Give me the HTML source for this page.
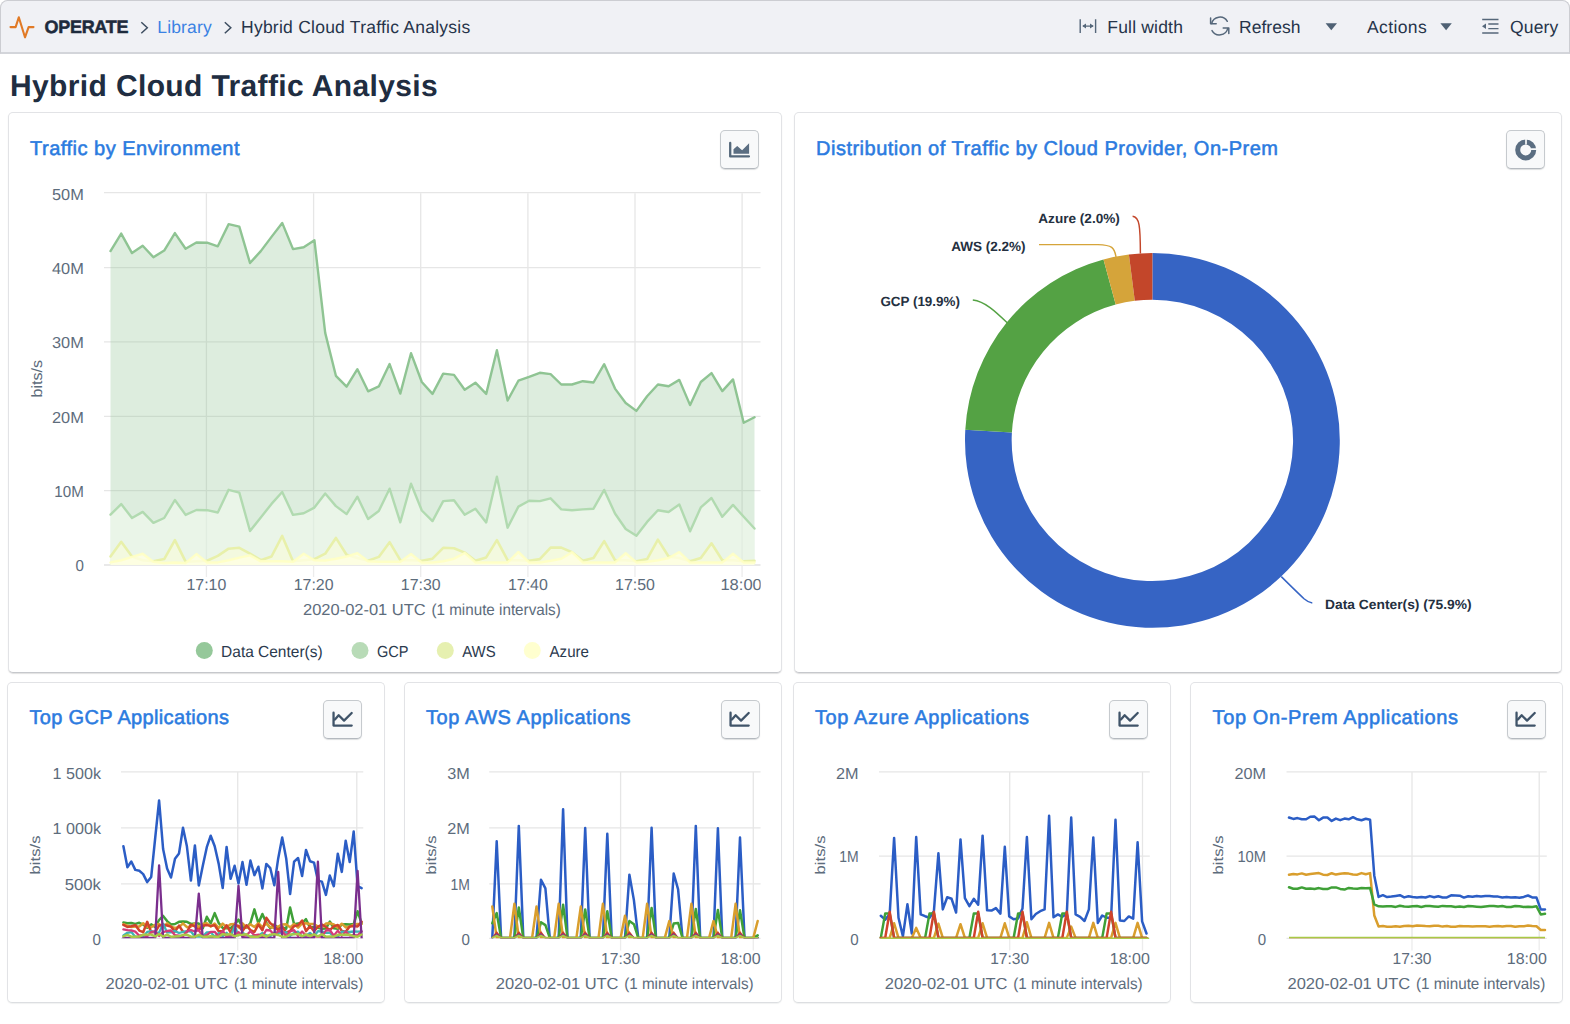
<!DOCTYPE html>
<html lang="en"><head><meta charset="utf-8"><title>Hybrid Cloud Traffic Analysis</title>
<style>
html,body{margin:0;padding:0;background:#fff;}
body{text-rendering:geometricPrecision;width:1570px;height:1024px;position:relative;overflow:hidden;font-family:"Liberation Sans", sans-serif;color:#1f2c3d;}
.topbar{position:absolute;left:0;top:0;width:1567.5px;height:51px;background:#f0f1f5;border:1px solid #cccdd2;border-bottom:2px solid #d3d5da;border-radius:7.5px 7.5px 0 0;}
.tb{position:absolute;white-space:nowrap;font-size:17.5px;line-height:20px;color:#26344a;}
.h1{position:absolute;left:10px;top:67.1px;font-size:30px;line-height:40px;font-weight:bold;color:#202d41;white-space:nowrap;letter-spacing:0;}
.panel{position:absolute;box-sizing:border-box;background:#fff;border:1px solid #e2e3e6;border-bottom-color:#c6c8cc;border-radius:5px;box-shadow:0 1px 1px rgba(60,65,70,.16);}
.panel.lo{border-bottom-color:#dcdee1;box-shadow:0 1px 1px rgba(60,65,70,.07);}
.ptitle{position:absolute;font-size:20px;line-height:26px;color:#2b7be0;white-space:nowrap;-webkit-text-stroke:0.55px #2b7be0;}
.btn{position:absolute;box-sizing:border-box;width:39px;height:39px;border:1px solid #c6cace;border-bottom-color:#b4b9bf;border-radius:5px;background:#f8f9fa;box-shadow:0 1px 1px rgba(60,70,80,.18);overflow:hidden;}
.btn svg{position:absolute;left:-0.5px;top:-0.5px;}
.ov{position:absolute;left:0;top:0;pointer-events:none;}
</style></head><body>
<div class="topbar"></div>
<svg class="ov" width="1570" height="53" viewBox="0 0 1570 53">
<path d="M10.5 27.1 H15.6 L18.8 17.3 L25 37.3 L28.6 27.1 H33.5" fill="none" stroke="#e17a26" stroke-width="2.1" stroke-linecap="round" stroke-linejoin="round"/>
<path d="M141.3 22.2 L147.3 27.7 L141.3 33.2" fill="none" stroke="#3d4d60" stroke-width="1.5"/>
<path d="M224.8 22.2 L230.8 27.7 L224.8 33.2" fill="none" stroke="#3d4d60" stroke-width="1.5"/>
<g fill="none" stroke="#55677a" stroke-width="1.4"><path d="M1080.2 19.2 V33 M1095.6 19.2 V33 M1083 26.1 H1093"/></g>
<path d="M1082.2 26.1 L1086 23.6 V28.6 Z M1093.8 26.1 L1090 23.6 V28.6 Z" fill="#55677a"/>
<g fill="none" stroke="#55677a" stroke-width="1.5" stroke-linecap="round" stroke-linejoin="round"><path d="M1211.6 23.6 A8.6 8.6 0 0 1 1227.3 21.3 M1227.8 28.4 A8.6 8.6 0 0 1 1212 30.6"/><path d="M1210.6 18 V23.8 H1216.2 M1228.8 33.6 V27.9 H1223.2"/></g>
<path d="M1325.6 23.2 H1337 L1331.3 30.3 Z" fill="#4f6174"/>
<path d="M1440.4 23.2 H1451.8 L1446.1 30.3 Z" fill="#4f6174"/>
<g fill="none" stroke="#55677a" stroke-width="1.4"><path d="M1482.2 19.5 H1498.5 M1488.3 24 H1498.5 M1488.3 28.6 H1498.5 M1482.2 33 H1498.5"/></g>
<path d="M1482 26.3 L1486 23.6 V29 Z" fill="#55677a"/>
</svg>
<div class="tb" style="letter-spacing:-0.312px;left:44.6px;top:17px;font-weight:bold;font-size:18px;color:#1d2a3c;-webkit-text-stroke:0.5px #1d2a3c">OPERATE</div>
<div class="tb" style="letter-spacing:0.143px;left:157.3px;top:17px;color:#3b82e3">Library</div>
<div class="tb" style="letter-spacing:0.244px;left:241px;top:17px">Hybrid Cloud Traffic Analysis</div>
<div class="tb" style="letter-spacing:0.188px;left:1107.3px;top:16.5px">Full width</div>
<div class="tb" style="letter-spacing:0.046px;left:1239px;top:16.5px">Refresh</div>
<div class="tb" style="letter-spacing:0.373px;left:1367px;top:16.5px">Actions</div>
<div class="tb" style="letter-spacing:0.169px;left:1510px;top:16.5px">Query</div>
<div class="h1" style="letter-spacing:0.369px">Hybrid Cloud Traffic Analysis</div>
<div class="panel" style="left:7.8px;top:111.6px;width:774px;height:561.8px"></div><div class="ptitle" style="letter-spacing:0.501px;left:30px;top:135.7px">Traffic by Environment</div><div class="btn" style="left:720.3px;top:130.2px"><svg width="38" height="38" viewBox="0 0 38 38"><path d="M9.2 12 V25.45 H27.9" fill="none" stroke="#55687b" stroke-width="2.3" stroke-linecap="round" stroke-linejoin="round"/><path d="M12.5 22.65 V18.25 L16.2 15.05 L21.1 19.15 L28.1 12.35 V22.65 Z" fill="#5b6e82"/></svg></div><div class="panel" style="left:794.1px;top:111.6px;width:768.2px;height:561.8px"></div><div class="ptitle" style="letter-spacing:0.498px;left:816px;top:135.7px">Distribution of Traffic by Cloud Provider, On-Prem</div><div class="btn" style="left:1506.1px;top:130.2px"><svg width="38" height="38" viewBox="0 0 38 38"><circle cx="18.7" cy="18.9" r="8" fill="none" stroke="#5b6e82" stroke-width="5"/><path d="M19 6.6 V13.6 M23.9 18.2 H30.4" stroke="#f8f9fa" stroke-width="1.7"/></svg></div><div class="panel lo" style="left:7.2px;top:681.6px;width:377.5px;height:321.3px"></div><div class="ptitle" style="letter-spacing:0.346px;left:29.4px;top:704.9px">Top GCP Applications</div><div class="btn" style="left:323.3px;top:700px"><svg width="38" height="38" viewBox="0 0 38 38"><path d="M9.55 11.7 V24.55 H27.7" fill="none" stroke="#405469" stroke-width="2.3" stroke-linecap="round" stroke-linejoin="round"/><path d="M10.9 18.6 L14.65 14.2 L20.05 19.6 L27.7 12" fill="none" stroke="#405469" stroke-width="2.3" stroke-linecap="round" stroke-linejoin="round"/></svg></div><div class="panel lo" style="left:403.8px;top:681.6px;width:378.2px;height:321.3px"></div><div class="ptitle" style="letter-spacing:0.569px;left:426px;top:704.9px">Top AWS Applications</div><div class="btn" style="left:720.5px;top:700px"><svg width="38" height="38" viewBox="0 0 38 38"><path d="M9.55 11.7 V24.55 H27.7" fill="none" stroke="#405469" stroke-width="2.3" stroke-linecap="round" stroke-linejoin="round"/><path d="M10.9 18.6 L14.65 14.2 L20.05 19.6 L27.7 12" fill="none" stroke="#405469" stroke-width="2.3" stroke-linecap="round" stroke-linejoin="round"/></svg></div><div class="panel lo" style="left:793.3px;top:681.6px;width:377.4px;height:321.3px"></div><div class="ptitle" style="letter-spacing:0.602px;left:815px;top:704.9px">Top Azure Applications</div><div class="btn" style="left:1109.4px;top:700px"><svg width="38" height="38" viewBox="0 0 38 38"><path d="M9.55 11.7 V24.55 H27.7" fill="none" stroke="#405469" stroke-width="2.3" stroke-linecap="round" stroke-linejoin="round"/><path d="M10.9 18.6 L14.65 14.2 L20.05 19.6 L27.7 12" fill="none" stroke="#405469" stroke-width="2.3" stroke-linecap="round" stroke-linejoin="round"/></svg></div><div class="panel lo" style="left:1190.3px;top:681.6px;width:372.6px;height:321.3px"></div><div class="ptitle" style="letter-spacing:0.615px;left:1212.6px;top:704.9px">Top On-Prem Applications</div><div class="btn" style="left:1506.7px;top:700px"><svg width="38" height="38" viewBox="0 0 38 38"><path d="M9.55 11.7 V24.55 H27.7" fill="none" stroke="#405469" stroke-width="2.3" stroke-linecap="round" stroke-linejoin="round"/><path d="M10.9 18.6 L14.65 14.2 L20.05 19.6 L27.7 12" fill="none" stroke="#405469" stroke-width="2.3" stroke-linecap="round" stroke-linejoin="round"/></svg></div>
<svg class="ov" width="1570" height="1024" viewBox="0 0 1570 1024" text-rendering="geometricPrecision" font-family='"Liberation Sans", sans-serif'><defs><clipPath id="cb"><rect x="0" y="700" width="1570" height="238.3"/></clipPath><clipPath id="cm"><rect x="100" y="180" width="670" height="385.8"/></clipPath><clipPath id="cx"><rect x="700" y="570" width="60.7" height="30"/></clipPath></defs><g><path d="M104 565 H760.5" stroke="#e9e9e9" stroke-width="2"/><text x="83.8" y="571.4" font-size="15.9" fill="#5d6c7c" text-anchor="end" font-weight="normal" textLength="8.4" lengthAdjust="spacingAndGlyphs">0</text><path d="M104 490.6 H760.5" stroke="#e6e6e6" stroke-width="1.3"/><text x="83.8" y="497" font-size="15.9" fill="#5d6c7c" text-anchor="end" font-weight="normal" textLength="29.5" lengthAdjust="spacingAndGlyphs">10M</text><path d="M104 416.3 H760.5" stroke="#e6e6e6" stroke-width="1.3"/><text x="83.8" y="422.7" font-size="15.9" fill="#5d6c7c" text-anchor="end" font-weight="normal" textLength="31.8" lengthAdjust="spacingAndGlyphs">20M</text><path d="M104 341.9 H760.5" stroke="#e6e6e6" stroke-width="1.3"/><text x="83.8" y="348.3" font-size="15.9" fill="#5d6c7c" text-anchor="end" font-weight="normal" textLength="31.8" lengthAdjust="spacingAndGlyphs">30M</text><path d="M104 267.6 H760.5" stroke="#e6e6e6" stroke-width="1.3"/><text x="83.8" y="274" font-size="15.9" fill="#5d6c7c" text-anchor="end" font-weight="normal" textLength="31.8" lengthAdjust="spacingAndGlyphs">40M</text><path d="M104 192.6 H760.5" stroke="#e6e6e6" stroke-width="1.3"/><text x="83.8" y="200.2" font-size="15.9" fill="#5d6c7c" text-anchor="end" font-weight="normal" textLength="31.8" lengthAdjust="spacingAndGlyphs">50M</text><path d="M206.4 193.2 V565" stroke="#e6e6e6" stroke-width="1.3"/><path d="M206.4 565 V577" stroke="#ececec" stroke-width="1.3"/><path d="M313.6 193.2 V565" stroke="#e6e6e6" stroke-width="1.3"/><path d="M313.6 565 V577" stroke="#ececec" stroke-width="1.3"/><path d="M420.7 193.2 V565" stroke="#e6e6e6" stroke-width="1.3"/><path d="M420.7 565 V577" stroke="#ececec" stroke-width="1.3"/><path d="M527.9 193.2 V565" stroke="#e6e6e6" stroke-width="1.3"/><path d="M527.9 565 V577" stroke="#ececec" stroke-width="1.3"/><path d="M635 193.2 V565" stroke="#e6e6e6" stroke-width="1.3"/><path d="M635 565 V577" stroke="#ececec" stroke-width="1.3"/><path d="M742.1 193.2 V565" stroke="#e6e6e6" stroke-width="1.3"/><path d="M742.1 565 V577" stroke="#ececec" stroke-width="1.3"/><text x="206.4" y="590.4" font-size="15.9" fill="#5d6c7c" text-anchor="middle" font-weight="normal" textLength="39.8" lengthAdjust="spacingAndGlyphs">17:10</text><text x="313.6" y="590.4" font-size="15.9" fill="#5d6c7c" text-anchor="middle" font-weight="normal" textLength="39.8" lengthAdjust="spacingAndGlyphs">17:20</text><text x="420.7" y="590.4" font-size="15.9" fill="#5d6c7c" text-anchor="middle" font-weight="normal" textLength="39.8" lengthAdjust="spacingAndGlyphs">17:30</text><text x="527.9" y="590.4" font-size="15.9" fill="#5d6c7c" text-anchor="middle" font-weight="normal" textLength="39.8" lengthAdjust="spacingAndGlyphs">17:40</text><text x="635" y="590.4" font-size="15.9" fill="#5d6c7c" text-anchor="middle" font-weight="normal" textLength="39.8" lengthAdjust="spacingAndGlyphs">17:50</text><text x="720.4" y="590.4" font-size="15.9" fill="#5d6c7c" text-anchor="start" font-weight="normal" textLength="41.4" lengthAdjust="spacingAndGlyphs" clip-path="url(#cx)">18:00</text><text x="303" y="615.2" font-size="15.9" fill="#5d6c7c" text-anchor="start" font-weight="normal" textLength="122.7" lengthAdjust="spacingAndGlyphs">2020-02-01 UTC</text><text x="431.4" y="615.2" font-size="15.9" fill="#5d6c7c" text-anchor="start" font-weight="normal" textLength="129.4" lengthAdjust="spacingAndGlyphs">(1 minute intervals)</text><text transform="translate(42 378.7) rotate(-90)" font-size="15" fill="#5d6c7c" text-anchor="middle" textLength="37.5" lengthAdjust="spacingAndGlyphs">bits/s</text></g>
<path clip-path="url(#cm)" d="M110.5 565 L110.5,251.1 121.2,233.6 132,253.1 142.7,245.8 153.4,257.2 164.2,250.6 174.9,233.1 185.6,248.8 196.4,242.5 207.1,242.7 217.8,246.3 228.6,224.2 239.3,226.7 250,263 260.8,251.1 271.5,236.9 282.2,222.9 293,249.1 303.7,247.3 314.4,240.2 325.2,332.9 335.9,375.8 346.6,386.7 357.4,369.2 368.1,391.3 378.8,386.4 389.6,364.1 400.3,393.6 411,353.2 421.8,382 432.5,393.9 443.2,373.6 454,374.9 464.7,389.8 475.4,382.7 486.2,393.9 496.9,350.2 507.6,400.5 518.4,380.7 529.1,376.9 539.8,372.8 550.6,374.1 561.3,384.5 572,384.5 582.8,381.2 593.5,382.5 604.2,364.2 615,388.6 625.7,403 636.4,410.9 647.1,396.2 657.9,384.5 668.6,386.3 679.3,379.9 690.1,405.1 700.8,382 711.5,373.1 722.3,391.1 733,379.4 743.7,422.8 754.5,417.3 L754.5 565 Z" fill="#8fc493" fill-opacity="0.3"/><polyline clip-path="url(#cm)" points="110.5,251.1 121.2,233.6 132,253.1 142.7,245.8 153.4,257.2 164.2,250.6 174.9,233.1 185.6,248.8 196.4,242.5 207.1,242.7 217.8,246.3 228.6,224.2 239.3,226.7 250,263 260.8,251.1 271.5,236.9 282.2,222.9 293,249.1 303.7,247.3 314.4,240.2 325.2,332.9 335.9,375.8 346.6,386.7 357.4,369.2 368.1,391.3 378.8,386.4 389.6,364.1 400.3,393.6 411,353.2 421.8,382 432.5,393.9 443.2,373.6 454,374.9 464.7,389.8 475.4,382.7 486.2,393.9 496.9,350.2 507.6,400.5 518.4,380.7 529.1,376.9 539.8,372.8 550.6,374.1 561.3,384.5 572,384.5 582.8,381.2 593.5,382.5 604.2,364.2 615,388.6 625.7,403 636.4,410.9 647.1,396.2 657.9,384.5 668.6,386.3 679.3,379.9 690.1,405.1 700.8,382 711.5,373.1 722.3,391.1 733,379.4 743.7,422.8 754.5,417.3" fill="none" stroke="#8fc493" stroke-width="2.4" stroke-opacity="1" stroke-linejoin="round" stroke-linecap="round"/>
<path clip-path="url(#cm)" d="M110.5 565 L110.5,514.7 121.2,504.1 132,518 142.7,511.9 153.4,522.9 164.2,518 174.9,500 185.6,514.9 196.4,510 207.1,510.2 217.8,512.5 228.6,489.8 239.3,492.6 250,531 260.8,517.5 271.5,503.9 282.2,492 293,514.9 303.7,513.2 314.4,507.6 325.2,493.5 335.9,506.1 346.6,514.1 357.4,496.7 368.1,519 378.8,511 389.6,488.7 400.3,522.3 411,483.7 421.8,510.5 432.5,521.1 443.2,501.1 454,500.3 464.7,514.8 475.4,508.7 486.2,522.4 496.9,476.7 507.6,527.7 518.4,506.6 529.1,500.8 539.8,501.1 550.6,498.3 561.3,509.4 572,510.2 582.8,509.4 593.5,508.7 604.2,489.9 615,513.5 625.7,529 636.4,535.8 647.1,521.9 657.9,510.2 668.6,512 679.3,504.4 690.1,531.3 700.8,507.4 711.5,498 722.3,516.8 733,504.9 743.7,516.8 754.5,528.5 L754.5 565 Z" fill="#f4fbf0" fill-opacity="0.55"/><polyline clip-path="url(#cm)" points="110.5,514.7 121.2,504.1 132,518 142.7,511.9 153.4,522.9 164.2,518 174.9,500 185.6,514.9 196.4,510 207.1,510.2 217.8,512.5 228.6,489.8 239.3,492.6 250,531 260.8,517.5 271.5,503.9 282.2,492 293,514.9 303.7,513.2 314.4,507.6 325.2,493.5 335.9,506.1 346.6,514.1 357.4,496.7 368.1,519 378.8,511 389.6,488.7 400.3,522.3 411,483.7 421.8,510.5 432.5,521.1 443.2,501.1 454,500.3 464.7,514.8 475.4,508.7 486.2,522.4 496.9,476.7 507.6,527.7 518.4,506.6 529.1,500.8 539.8,501.1 550.6,498.3 561.3,509.4 572,510.2 582.8,509.4 593.5,508.7 604.2,489.9 615,513.5 625.7,529 636.4,535.8 647.1,521.9 657.9,510.2 668.6,512 679.3,504.4 690.1,531.3 700.8,507.4 711.5,498 722.3,516.8 733,504.9 743.7,516.8 754.5,528.5" fill="none" stroke="#b1dab0" stroke-width="2.4" stroke-opacity="1" stroke-linejoin="round" stroke-linecap="round"/>
<path clip-path="url(#cm)" d="M110.5 565 L110.5,556.5 121.2,541.8 132,556.5 142.7,560.2 153.4,561.3 164.2,559.1 174.9,540.1 185.6,561.7 196.4,561.3 207.1,560.8 217.8,555.9 228.6,548.7 239.3,547.8 250,553.7 260.8,560.2 271.5,556.5 282.2,535.9 293,561.3 303.7,560.2 314.4,559.1 325.2,553.7 335.9,537.9 346.6,554.8 357.4,558 368.1,560.8 378.8,556.9 389.6,542.2 400.3,560.2 411,560.2 421.8,560.8 432.5,558.7 443.2,547.8 454,548.3 464.7,552.6 475.4,560.8 486.2,557.4 496.9,540.1 507.6,560.2 518.4,560.2 529.1,560.8 539.8,559.1 550.6,547.6 561.3,547.6 572,552.2 582.8,560.8 593.5,558 604.2,541.1 615,560.2 625.7,560.2 636.4,561.3 647.1,559.1 657.9,539.6 668.6,556.5 679.3,558 690.1,561.3 700.8,558 711.5,543.3 722.3,560.2 733,560.2 743.7,561.3 754.5,560.8 L754.5 565 Z" fill="#f6fadc" fill-opacity="0.75"/><polyline clip-path="url(#cm)" points="110.5,556.5 121.2,541.8 132,556.5 142.7,560.2 153.4,561.3 164.2,559.1 174.9,540.1 185.6,561.7 196.4,561.3 207.1,560.8 217.8,555.9 228.6,548.7 239.3,547.8 250,553.7 260.8,560.2 271.5,556.5 282.2,535.9 293,561.3 303.7,560.2 314.4,559.1 325.2,553.7 335.9,537.9 346.6,554.8 357.4,558 368.1,560.8 378.8,556.9 389.6,542.2 400.3,560.2 411,560.2 421.8,560.8 432.5,558.7 443.2,547.8 454,548.3 464.7,552.6 475.4,560.8 486.2,557.4 496.9,540.1 507.6,560.2 518.4,560.2 529.1,560.8 539.8,559.1 550.6,547.6 561.3,547.6 572,552.2 582.8,560.8 593.5,558 604.2,541.1 615,560.2 625.7,560.2 636.4,561.3 647.1,559.1 657.9,539.6 668.6,556.5 679.3,558 690.1,561.3 700.8,558 711.5,543.3 722.3,560.2 733,560.2 743.7,561.3 754.5,560.8" fill="none" stroke="#e8f0aa" stroke-width="2.6" stroke-opacity="1" stroke-linejoin="round" stroke-linecap="round"/>
<path clip-path="url(#cm)" d="M110.5 565 L110.5,562.4 121.2,560.2 132,556.9 142.7,553.7 153.4,561.7 164.2,563 174.9,562.4 185.6,563 196.4,554.1 207.1,562.4 217.8,562.4 228.6,560.2 239.3,557.6 250,555.4 260.8,561.3 271.5,561.3 282.2,561.3 293,561.7 303.7,553.7 314.4,560.2 325.2,560.6 335.9,558.7 346.6,556.5 357.4,553.3 368.1,561.3 378.8,561.7 389.6,561.7 400.3,561.7 411,554.1 421.8,562.4 432.5,562.4 443.2,561.3 454,558.7 464.7,553 475.4,562.4 486.2,562.4 496.9,562.4 507.6,562.4 518.4,552 529.1,562.4 539.8,562.4 550.6,560.8 561.3,558.7 572,552.2 582.8,562.4 593.5,562.4 604.2,562.4 615,562.4 625.7,553.3 636.4,562.4 647.1,561.7 657.9,560.2 668.6,558 679.3,552.2 690.1,562.4 700.8,562.4 711.5,562.4 722.3,562.4 733,553.7 743.7,562.4 754.5,562.4 L754.5 565 Z" fill="#ffffe2" fill-opacity="0.8"/><polyline clip-path="url(#cm)" points="110.5,562.4 121.2,560.2 132,556.9 142.7,553.7 153.4,561.7 164.2,563 174.9,562.4 185.6,563 196.4,554.1 207.1,562.4 217.8,562.4 228.6,560.2 239.3,557.6 250,555.4 260.8,561.3 271.5,561.3 282.2,561.3 293,561.7 303.7,553.7 314.4,560.2 325.2,560.6 335.9,558.7 346.6,556.5 357.4,553.3 368.1,561.3 378.8,561.7 389.6,561.7 400.3,561.7 411,554.1 421.8,562.4 432.5,562.4 443.2,561.3 454,558.7 464.7,553 475.4,562.4 486.2,562.4 496.9,562.4 507.6,562.4 518.4,552 529.1,562.4 539.8,562.4 550.6,560.8 561.3,558.7 572,552.2 582.8,562.4 593.5,562.4 604.2,562.4 615,562.4 625.7,553.3 636.4,562.4 647.1,561.7 657.9,560.2 668.6,558 679.3,552.2 690.1,562.4 700.8,562.4 711.5,562.4 722.3,562.4 733,553.7 743.7,562.4 754.5,562.4" fill="none" stroke="#ffffc4" stroke-width="2.5" stroke-opacity="0.9" stroke-linejoin="round" stroke-linecap="round"/>
<circle cx="204.3" cy="650.5" r="8.5" fill="#95c89a"/>
<text x="221.1" y="657.2" font-size="16" fill="#2b3a4e" text-anchor="start" font-weight="normal" textLength="101.5" lengthAdjust="spacingAndGlyphs">Data Center(s)</text>
<circle cx="360" cy="650.5" r="8.5" fill="#b8dbb7"/>
<text x="377" y="657.2" font-size="16" fill="#2b3a4e" text-anchor="start" font-weight="normal" textLength="31.5" lengthAdjust="spacingAndGlyphs">GCP</text>
<circle cx="445.3" cy="650.5" r="8.5" fill="#e6f0b0"/>
<text x="462.2" y="657.2" font-size="16" fill="#2b3a4e" text-anchor="start" font-weight="normal" textLength="33.5" lengthAdjust="spacingAndGlyphs">AWS</text>
<circle cx="532.3" cy="650.5" r="8.5" fill="#ffffcf"/>
<text x="549.5" y="657.2" font-size="16" fill="#2b3a4e" text-anchor="start" font-weight="normal" textLength="39.5" lengthAdjust="spacingAndGlyphs">Azure</text>
<path d="M1152.4 253 A187.4 187.4 0 1 1 965.3 429.8 L1011.9 432.4 A140.7 140.7 0 1 0 1152.4 299.7 Z" fill="#3664c4"/>
<path d="M965.3 429.8 A187.4 187.4 0 0 1 1103.5 259.5 L1115.7 304.6 A140.7 140.7 0 0 0 1011.9 432.4 Z" fill="#54a244"/>
<path d="M1103.5 259.5 A187.4 187.4 0 0 1 1128.9 254.5 L1134.8 300.8 A140.7 140.7 0 0 0 1115.7 304.6 Z" fill="#d5a43a"/>
<path d="M1128.9 254.5 A187.4 187.4 0 0 1 1152.4 253 L1152.4 299.7 A140.7 140.7 0 0 0 1134.8 300.8 Z" fill="#c3462a"/>
<path d="M1132.6 216.3 C1139.5 217 1140.3 226 1140.4 253.6" fill="none" stroke="#c3462a" stroke-width="1.45"/>
<path d="M1039 244.6 H1098 C1112 245 1114.5 247.5 1116 257" fill="none" stroke="#d5a43a" stroke-width="1.45"/>
<path d="M972.8 300 C985 301.5 995 311 1007.5 323" fill="none" stroke="#54a244" stroke-width="1.45"/>
<path d="M1281.3 576.6 C1290 585.2 1299.5 594.5 1304 598.7 C1307 601.3 1309.5 602.6 1312.3 602.9" fill="none" stroke="#3664c4" stroke-width="1.5"/>
<text x="1038.3" y="223.1" font-size="13.4" fill="#24303f" text-anchor="start" font-weight="bold" textLength="81.6" lengthAdjust="spacingAndGlyphs">Azure (2.0%)</text>
<text x="951.2" y="250.6" font-size="13.4" fill="#24303f" text-anchor="start" font-weight="bold" textLength="74.4" lengthAdjust="spacingAndGlyphs">AWS (2.2%)</text>
<text x="880.4" y="306.2" font-size="13.4" fill="#24303f" text-anchor="start" font-weight="bold" textLength="79.5" lengthAdjust="spacingAndGlyphs">GCP (19.9%)</text>
<text x="1325.1" y="609" font-size="13.4" fill="#24303f" text-anchor="start" font-weight="bold" textLength="146.5" lengthAdjust="spacingAndGlyphs">Data Center(s) (75.9%)</text>
<path d="M121 938.4 H363.3" stroke="#e6e6e6" stroke-width="1.3"/><text x="101" y="944.5" font-size="15.9" fill="#5d6c7c" text-anchor="end" font-weight="normal" textLength="8.4" lengthAdjust="spacingAndGlyphs">0</text><path d="M121 883.9 H363.3" stroke="#e6e6e6" stroke-width="1.3"/><text x="101" y="890" font-size="15.9" fill="#5d6c7c" text-anchor="end" font-weight="normal" textLength="36.3" lengthAdjust="spacingAndGlyphs">500k</text><path d="M121 827.9 H363.3" stroke="#e6e6e6" stroke-width="1.3"/><text x="101" y="834" font-size="15.9" fill="#5d6c7c" text-anchor="end" font-weight="normal" textLength="48.4" lengthAdjust="spacingAndGlyphs">1 000k</text><path d="M121 771.9 H363.3" stroke="#e6e6e6" stroke-width="1.3"/><text x="101" y="779" font-size="15.9" fill="#5d6c7c" text-anchor="end" font-weight="normal" textLength="48.4" lengthAdjust="spacingAndGlyphs">1 500k</text><path d="M237.7 771.9 V938.4" stroke="#e6e6e6" stroke-width="1.3"/><path d="M237.7 938.4 V950.6" stroke="#ececec" stroke-width="1.3"/><path d="M356.8 771.9 V938.4" stroke="#e6e6e6" stroke-width="1.3"/><path d="M356.8 938.4 V950.6" stroke="#ececec" stroke-width="1.3"/><text x="237.7" y="964.1" font-size="15.9" fill="#5d6c7c" text-anchor="middle" font-weight="normal" textLength="39" lengthAdjust="spacingAndGlyphs">17:30</text><text x="363.3" y="964.1" font-size="15.9" fill="#5d6c7c" text-anchor="end" font-weight="normal" textLength="40" lengthAdjust="spacingAndGlyphs">18:00</text><text x="105.5" y="989.1" font-size="15.9" fill="#5d6c7c" text-anchor="start" font-weight="normal" textLength="122.7" lengthAdjust="spacingAndGlyphs">2020-02-01 UTC</text><text x="233.9" y="989.1" font-size="15.9" fill="#5d6c7c" text-anchor="start" font-weight="normal" textLength="129.4" lengthAdjust="spacingAndGlyphs">(1 minute intervals)</text><text transform="translate(39.6 855) rotate(-90)" font-size="14" fill="#5d6c7c" text-anchor="middle" textLength="39" lengthAdjust="spacingAndGlyphs">bits/s</text>
<polyline clip-path="url(#cb)" points="123.4,846.3 127.4,867.3 131.3,861.5 135.3,869.9 139.3,870.8 143.2,874.1 147.2,882.1 151.2,876.9 155.2,838 159.1,800.5 163.1,849.1 167.1,868.6 171,877.5 175,858.7 179,853.4 183,827.7 186.9,846.3 190.9,880.6 194.9,845.4 198.8,885.5 202.8,865.8 206.8,847.2 210.7,835.7 214.7,846.3 218.7,863.9 222.7,888.1 226.6,846.9 230.6,878.8 234.6,865.8 238.5,883.4 242.5,862.1 246.5,884.7 250.4,860.6 254.4,875.1 258.4,866.7 262.4,888.4 266.3,863.9 270.3,868.2 274.3,885.3 278.2,858.4 282.2,837.6 286.2,858.4 290.1,894 294.1,861.7 298.1,858 302.1,876 306,850 310,861.2 314,862.6 317.9,880.6 321.9,881.6 325.9,894.9 329.8,875.6 333.8,886.2 337.8,853.7 341.8,871.9 345.7,840.7 349.7,862.1 353.7,831.5 357.6,886.2 361.6,888.1" fill="none" stroke="#2b5dc5" stroke-width="2.5" stroke-linejoin="round" stroke-linecap="round"/>
<polyline clip-path="url(#cb)" points="123.4,922.4 127.4,923.3 131.3,923 135.3,923.9 139.3,922.8 143.2,924.6 147.2,927.7 151.2,924.4 155.2,927 159.1,920 163.1,915.9 167.1,921.1 171,924.5 175,924 179,921.8 183,921.5 186.9,921.8 190.9,923.9 194.9,923.5 198.8,923.6 202.8,928.4 206.8,916.8 210.7,923.3 214.7,913.1 218.7,923 222.7,927.9 226.6,928.3 230.6,928.1 234.6,924.4 238.5,919.6 242.5,927.2 246.5,927.7 250.4,923.1 254.4,909.4 258.4,923.3 262.4,914 266.3,922.7 270.3,928.3 274.3,924.5 278.2,928.2 282.2,927.4 286.2,928.7 290.1,907.6 294.1,924.3 298.1,923.6 302.1,923.1 306,919.2 310,927.6 314,927 317.9,927.7 321.9,928.7 325.9,928.6 329.8,921.5 333.8,928.2 337.8,928.8 341.8,924.5 345.7,924.2 349.7,924.6 353.7,924.1 357.6,911.3 361.6,923.3" fill="none" stroke="#3fa037" stroke-width="2.5" stroke-linejoin="round" stroke-linecap="round"/>
<polyline clip-path="url(#cb)" points="123.4,924.3 127.4,925.6 131.3,927 135.3,926.6 139.3,926.5 143.2,923.2 147.2,926.7 151.2,927.3 155.2,924.7 159.1,923.9 163.1,927.4 167.1,923.3 171,926.6 175,927.9 179,927.1 183,923.4 186.9,927.2 190.9,926.5 194.9,923.5 198.8,927.1 202.8,923.9 206.8,923.2 210.7,926.6 214.7,923.5 218.7,927.9 222.7,923.6 226.6,927.2 230.6,924.2 234.6,923.9 238.5,927.4 242.5,923.4 246.5,927.6 250.4,924.4 254.4,927 258.4,923.2 262.4,927.1 266.3,923.6 270.3,927.1 274.3,927.9 278.2,926.5 282.2,924.4 286.2,924.2 290.1,927.4 294.1,924 298.1,927.7 302.1,923.4 306,923.3 310,924 314,924 317.9,926.5 321.9,927.1 325.9,923.6 329.8,923.2 333.8,924.5 337.8,927.7 341.8,923.7 345.7,927.4 349.7,926.6 353.7,924.7 357.6,923.9 361.6,924" fill="none" stroke="#d99e2d" stroke-width="2.5" stroke-linejoin="round" stroke-linecap="round"/>
<polyline clip-path="url(#cb)" points="123.4,924.9 127.4,927 131.3,926.3 135.3,925.1 139.3,930.6 143.2,932.2 147.2,921.8 151.2,932.3 155.2,932.1 159.1,925.7 163.1,924.8 167.1,925.5 171,926.6 175,931.6 179,925.6 183,931.8 186.9,932 190.9,924.7 194.9,926.4 198.8,930.1 202.8,925.7 206.8,925.1 210.7,925.9 214.7,925.3 218.7,931.3 222.7,931.3 226.6,925.2 230.6,932.4 234.6,924.9 238.5,926 242.5,931.1 246.5,925.3 250.4,930.1 254.4,932 258.4,924.6 262.4,930.3 266.3,917.8 270.3,923.3 274.3,926 278.2,930.4 282.2,926.7 286.2,932.6 290.1,930.9 294.1,926.1 298.1,925.2 302.1,920.5 306,931.1 310,926.1 314,931.3 317.9,926.8 321.9,924.5 325.9,926.9 329.8,930.1 333.8,926.4 337.8,924.9 341.8,931 345.7,931.8 349.7,926.4 353.7,926 357.6,926.4 361.6,921.8" fill="none" stroke="#d0432b" stroke-width="2.5" stroke-linejoin="round" stroke-linecap="round"/>
<polyline clip-path="url(#cb)" points="123.4,935.4 127.4,932.8 131.3,932.1 135.3,936.7 139.3,936.7 143.2,936.5 147.2,931.9 151.2,931.1 155.2,932.4 159.1,932.6 163.1,923.7 167.1,932.4 171,932.4 175,930.9 179,933 183,931.9 186.9,931.1 190.9,931.6 194.9,936.5 198.8,936.7 202.8,936.6 206.8,932.3 210.7,932.2 214.7,936.7 218.7,933 222.7,936.1 226.6,932.8 230.6,936.7 234.6,926.1 238.5,935.3 242.5,932.7 246.5,935.2 250.4,936.7 254.4,935.7 258.4,935.6 262.4,933 266.3,935.4 270.3,936.2 274.3,932.5 278.2,932.8 282.2,932.7 286.2,932.2 290.1,935.8 294.1,932.8 298.1,931.6 302.1,936.7 306,935.5 310,932.9 314,936.7 317.9,931.1 321.9,931.3 325.9,932.8 329.8,932.7 333.8,936.7 337.8,936.7 341.8,931.7 345.7,932 349.7,932 353.7,931.5 357.6,931.6 361.6,931.5" fill="none" stroke="#3db4b6" stroke-width="2.3" stroke-linejoin="round" stroke-linecap="round"/>
<polyline clip-path="url(#cb)" points="123.4,929.3 127.4,930.2 131.3,930.4 135.3,931.6 139.3,935.7 143.2,934.8 147.2,936.3 151.2,931.9 155.2,931.4 159.1,936 163.1,932.1 167.1,931 171,930.5 175,935.2 179,935.6 183,936.3 186.9,931.4 190.9,930 194.9,931.5 198.8,930.2 202.8,936.7 206.8,935.1 210.7,931.9 214.7,931.8 218.7,936.7 222.7,930.7 226.6,936.6 230.6,935.1 234.6,935.5 238.5,932.1 242.5,936.1 246.5,935.3 250.4,931.2 254.4,935.3 258.4,934.6 262.4,936.5 266.3,930 270.3,930.5 274.3,935.2 278.2,931.2 282.2,931.3 286.2,936.3 290.1,931.5 294.1,930.2 298.1,936 302.1,931.5 306,935.6 310,935 314,936.4 317.9,936.6 321.9,936.7 325.9,930.5 329.8,930 333.8,935.6 337.8,930.6 341.8,935.7 345.7,931.7 349.7,935.4 353.7,935.2 357.6,935.5 361.6,931.4" fill="none" stroke="#d43b78" stroke-width="2.3" stroke-linejoin="round" stroke-linecap="round"/>
<polyline clip-path="url(#cb)" points="123.4,938 127.4,938 131.3,938 135.3,938 139.3,938 143.2,938 147.2,938 151.2,938 155.2,938 159.1,865.4 163.1,938 167.1,938 171,938 175,938 179,938 183,938 186.9,938 190.9,938 194.9,938 198.8,893.6 202.8,938 206.8,938 210.7,938 214.7,938 218.7,938 222.7,938 226.6,938 230.6,938 234.6,938 238.5,885.8 242.5,938 246.5,938 250.4,938 254.4,938 258.4,938 262.4,938 266.3,938 270.3,938 274.3,938 278.2,871.9 282.2,938 286.2,938 290.1,938 294.1,938 298.1,938 302.1,938 306,938 310,938 314,938 317.9,861.7 321.9,938 325.9,938 329.8,938 333.8,938 337.8,938 341.8,938 345.7,938 349.7,938 353.7,938 357.6,871 361.6,938" fill="none" stroke="#7a2e8d" stroke-width="2.3" stroke-linejoin="round" stroke-linecap="round"/>
<polyline clip-path="url(#cb)" points="123.4,936.3 127.4,934.9 131.3,936.7 135.3,936.7 139.3,936.6 143.2,934.7 147.2,934.6 151.2,934.6 155.2,936.4 159.1,934 163.1,936.6 167.1,934.6 171,936.7 175,936.5 179,936.3 183,934.9 186.9,934.6 190.9,936.6 194.9,936.7 198.8,934.9 202.8,936.7 206.8,936.7 210.7,936.2 214.7,936.7 218.7,936.7 222.7,934.1 226.6,934.8 230.6,934 234.6,936.3 238.5,935 242.5,934.7 246.5,934.3 250.4,936.7 254.4,936.7 258.4,936.7 262.4,934.9 266.3,936.7 270.3,934.6 274.3,934.1 278.2,935 282.2,936.7 286.2,936.7 290.1,934.5 294.1,934.4 298.1,933.9 302.1,936.2 306,934.4 310,936.2 314,934.3 317.9,936.4 321.9,934.2 325.9,936.6 329.8,936.4 333.8,936.7 337.8,934.8 341.8,934.7 345.7,934.7 349.7,934.7 353.7,936.3 357.6,936.7 361.6,934.5" fill="none" stroke="#a9c945" stroke-width="2.4" stroke-linejoin="round" stroke-linecap="round"/>
<path d="M489.2 938.4 H760.6" stroke="#e6e6e6" stroke-width="1.3"/><text x="469.8" y="944.5" font-size="15.9" fill="#5d6c7c" text-anchor="end" font-weight="normal" textLength="8.4" lengthAdjust="spacingAndGlyphs">0</text><path d="M489.2 883.9 H760.6" stroke="#e6e6e6" stroke-width="1.3"/><text x="469.8" y="890" font-size="15.9" fill="#5d6c7c" text-anchor="end" font-weight="normal" textLength="19.4" lengthAdjust="spacingAndGlyphs">1M</text><path d="M489.2 827.9 H760.6" stroke="#e6e6e6" stroke-width="1.3"/><text x="469.8" y="834" font-size="15.9" fill="#5d6c7c" text-anchor="end" font-weight="normal" textLength="22.5" lengthAdjust="spacingAndGlyphs">2M</text><path d="M489.2 771.9 H760.6" stroke="#e6e6e6" stroke-width="1.3"/><text x="469.8" y="779" font-size="15.9" fill="#5d6c7c" text-anchor="end" font-weight="normal" textLength="22.5" lengthAdjust="spacingAndGlyphs">3M</text><path d="M620.6 771.9 V938.4" stroke="#e6e6e6" stroke-width="1.3"/><path d="M620.6 938.4 V950.6" stroke="#ececec" stroke-width="1.3"/><path d="M753.3 771.9 V938.4" stroke="#e6e6e6" stroke-width="1.3"/><path d="M753.3 938.4 V950.6" stroke="#ececec" stroke-width="1.3"/><text x="620.6" y="964.1" font-size="15.9" fill="#5d6c7c" text-anchor="middle" font-weight="normal" textLength="39" lengthAdjust="spacingAndGlyphs">17:30</text><text x="760.6" y="964.1" font-size="15.9" fill="#5d6c7c" text-anchor="end" font-weight="normal" textLength="40" lengthAdjust="spacingAndGlyphs">18:00</text><text x="495.8" y="989.1" font-size="15.9" fill="#5d6c7c" text-anchor="start" font-weight="normal" textLength="122.7" lengthAdjust="spacingAndGlyphs">2020-02-01 UTC</text><text x="624.2" y="989.1" font-size="15.9" fill="#5d6c7c" text-anchor="start" font-weight="normal" textLength="129.4" lengthAdjust="spacingAndGlyphs">(1 minute intervals)</text><text transform="translate(436 855) rotate(-90)" font-size="14" fill="#5d6c7c" text-anchor="middle" textLength="39" lengthAdjust="spacingAndGlyphs">bits/s</text>
<polyline clip-path="url(#cb)" points="492.3,937.9 496.7,841.3 501.1,937.9 505.6,937.9 510,937.9 514.4,937.9 518.8,825.9 523.3,937.9 527.7,937.9 532.1,937.9 536.5,937.9 541,879.7 545.4,888.4 549.8,937.9 554.2,937.9 558.7,937.9 563.1,809.2 567.5,937.9 571.9,937.9 576.4,937.9 580.8,937.9 585.2,828.1 589.6,937.9 594.1,937.9 598.5,937.9 602.9,937.9 607.3,833.8 611.7,937.9 616.2,937.9 620.6,937.9 625,937.9 629.4,874.7 633.9,900.1 638.3,937.9 642.7,937.9 647.1,937.9 651.6,827.7 656,937.9 660.4,937.9 664.8,937.9 669.3,937.9 673.7,873.5 678.1,889.3 682.5,937.9 687,937.9 691.4,937.9 695.8,825.9 700.2,937.9 704.7,937.9 709.1,937.9 713.5,937.9 717.9,828.3 722.3,937.9 726.8,937.9 731.2,937.9 735.6,937.9 740,837.6 744.5,937.9 748.9,937.9 753.3,937.9 757.7,937.9" fill="none" stroke="#2b5dc5" stroke-width="2.5" stroke-linejoin="round" stroke-linecap="round"/>
<polyline clip-path="url(#cb)" points="492.3,923.3 496.7,913.1 501.1,937.9 505.6,937.9 510,937.9 514.4,937.9 518.8,907.5 523.3,937.9 527.7,937.9 532.1,937.9 536.5,937.9 541,922.3 545.4,925.1 549.8,937.9 554.2,937.9 558.7,937.9 563.1,904.7 567.5,937.9 571.9,937.9 576.4,937.9 580.8,937.9 585.2,909.4 589.6,937.9 594.1,937.9 598.5,937.9 602.9,937.9 607.3,911.2 611.7,937.9 616.2,937.9 620.6,937.9 625,937.9 629.4,921 633.9,924.2 638.3,937.9 642.7,937.9 647.1,937.9 651.6,907.9 656,937.9 660.4,937.9 664.8,937.9 669.3,937.9 673.7,923.6 678.1,922.9 682.5,937.9 687,937.9 691.4,937.9 695.8,909 700.2,937.9 704.7,937.9 709.1,937.9 713.5,937.9 717.9,909.9 722.3,937.9 726.8,937.9 731.2,937.9 735.6,937.9 740,910.3 744.5,937.9 748.9,937.9 753.3,937.9 757.7,935.3" fill="none" stroke="#3fa037" stroke-width="2.5" stroke-linejoin="round" stroke-linecap="round"/>
<polyline clip-path="url(#cb)" points="492.3,906.6 496.7,937.9 501.1,937.9 505.6,937.9 510,937.9 514.4,903.8 518.8,937.9 523.3,937.9 527.7,937.9 532.1,937.9 536.5,906.6 541,937.9 545.4,937.9 549.8,937.9 554.2,937.9 558.7,903.8 563.1,937.9 567.5,937.9 571.9,937.9 576.4,937.9 580.8,906.6 585.2,937.9 589.6,937.9 594.1,937.9 598.5,937.9 602.9,903.8 607.3,937.9 611.7,937.9 616.2,937.9 620.6,937.9 625,915.8 629.4,937.9 633.9,937.9 638.3,937.9 642.7,937.9 647.1,903.8 651.6,937.9 656,937.9 660.4,937.9 664.8,937.9 669.3,921 673.7,937.9 678.1,937.9 682.5,937.9 687,937.9 691.4,903.8 695.8,937.9 700.2,937.9 704.7,937.9 709.1,937.9 713.5,921 717.9,937.9 722.3,937.9 726.8,937.9 731.2,937.9 735.6,903.8 740,937.9 744.5,937.9 748.9,937.9 753.3,937.9 757.7,921" fill="none" stroke="#d99e2d" stroke-width="2.5" stroke-linejoin="round" stroke-linecap="round"/>
<polyline clip-path="url(#cb)" points="492.3,937.9 496.7,932.2 501.1,937.9 505.6,937.9 510,937.9 514.4,937.9 518.8,932.2 523.3,937.9 527.7,937.9 532.1,937.9 536.5,937.9 541,932.2 545.4,937.9 549.8,937.9 554.2,937.9 558.7,937.9 563.1,932.2 567.5,937.9 571.9,937.9 576.4,937.9 580.8,937.9 585.2,932.2 589.6,937.9 594.1,937.9 598.5,937.9 602.9,937.9 607.3,932.2 611.7,937.9 616.2,937.9 620.6,937.9 625,937.9 629.4,932.2 633.9,937.9 638.3,937.9 642.7,937.9 647.1,937.9 651.6,932.2 656,937.9 660.4,937.9 664.8,937.9 669.3,937.9 673.7,932.2 678.1,937.9 682.5,937.9 687,937.9 691.4,937.9 695.8,932.2 700.2,937.9 704.7,937.9 709.1,937.9 713.5,937.9 717.9,932.2 722.3,937.9 726.8,937.9 731.2,937.9 735.6,937.9 740,932.2 744.5,937.9 748.9,937.9 753.3,937.9 757.7,937.9" fill="none" stroke="#d0432b" stroke-width="1.6" stroke-linejoin="round" stroke-linecap="round"/>
<polyline clip-path="url(#cb)" points="492.3,937.9 496.7,934 501.1,937.9 505.6,937.9 510,937.9 514.4,937.9 518.8,934 523.3,937.9 527.7,937.9 532.1,937.9 536.5,937.9 541,934 545.4,937.9 549.8,937.9 554.2,937.9 558.7,937.9 563.1,934 567.5,937.9 571.9,937.9 576.4,937.9 580.8,937.9 585.2,934 589.6,937.9 594.1,937.9 598.5,937.9 602.9,937.9 607.3,934 611.7,937.9 616.2,937.9 620.6,937.9 625,937.9 629.4,934 633.9,937.9 638.3,937.9 642.7,937.9 647.1,937.9 651.6,934 656,937.9 660.4,937.9 664.8,937.9 669.3,937.9 673.7,934 678.1,937.9 682.5,937.9 687,937.9 691.4,937.9 695.8,934 700.2,937.9 704.7,937.9 709.1,937.9 713.5,937.9 717.9,934 722.3,937.9 726.8,937.9 731.2,937.9 735.6,937.9 740,934 744.5,937.9 748.9,937.9 753.3,937.9 757.7,937.9" fill="none" stroke="#7a2e8d" stroke-width="1.6" stroke-linejoin="round" stroke-linecap="round"/>
<polyline clip-path="url(#cb)" points="492.3,937.9 496.7,935.5 501.1,937.9 505.6,937.9 510,937.9 514.4,937.9 518.8,935.5 523.3,937.9 527.7,937.9 532.1,937.9 536.5,937.9 541,935.5 545.4,937.9 549.8,937.9 554.2,937.9 558.7,937.9 563.1,935.5 567.5,937.9 571.9,937.9 576.4,937.9 580.8,937.9 585.2,935.5 589.6,937.9 594.1,937.9 598.5,937.9 602.9,937.9 607.3,935.5 611.7,937.9 616.2,937.9 620.6,937.9 625,937.9 629.4,935.5 633.9,937.9 638.3,937.9 642.7,937.9 647.1,937.9 651.6,935.5 656,937.9 660.4,937.9 664.8,937.9 669.3,937.9 673.7,935.5 678.1,937.9 682.5,937.9 687,937.9 691.4,937.9 695.8,935.5 700.2,937.9 704.7,937.9 709.1,937.9 713.5,937.9 717.9,935.5 722.3,937.9 726.8,937.9 731.2,937.9 735.6,937.9 740,935.5 744.5,937.9 748.9,937.9 753.3,937.9 757.7,937.9" fill="none" stroke="#a9c945" stroke-width="1.8" stroke-linejoin="round" stroke-linecap="round"/>
<path d="M879 938.4 H1149.8" stroke="#e6e6e6" stroke-width="1.3"/><text x="858.6" y="944.5" font-size="15.9" fill="#5d6c7c" text-anchor="end" font-weight="normal" textLength="8.4" lengthAdjust="spacingAndGlyphs">0</text><path d="M879 856.2 H1149.8" stroke="#e6e6e6" stroke-width="1.3"/><text x="858.6" y="862.3" font-size="15.9" fill="#5d6c7c" text-anchor="end" font-weight="normal" textLength="19.4" lengthAdjust="spacingAndGlyphs">1M</text><path d="M879 771.9 H1149.8" stroke="#e6e6e6" stroke-width="1.3"/><text x="858.6" y="779" font-size="15.9" fill="#5d6c7c" text-anchor="end" font-weight="normal" textLength="22.5" lengthAdjust="spacingAndGlyphs">2M</text><path d="M1009.7 771.9 V938.4" stroke="#e6e6e6" stroke-width="1.3"/><path d="M1009.7 938.4 V950.6" stroke="#ececec" stroke-width="1.3"/><path d="M1142.5 771.9 V938.4" stroke="#e6e6e6" stroke-width="1.3"/><path d="M1142.5 938.4 V950.6" stroke="#ececec" stroke-width="1.3"/><text x="1009.7" y="964.1" font-size="15.9" fill="#5d6c7c" text-anchor="middle" font-weight="normal" textLength="39" lengthAdjust="spacingAndGlyphs">17:30</text><text x="1149.8" y="964.1" font-size="15.9" fill="#5d6c7c" text-anchor="end" font-weight="normal" textLength="40" lengthAdjust="spacingAndGlyphs">18:00</text><text x="884.8" y="989.1" font-size="15.9" fill="#5d6c7c" text-anchor="start" font-weight="normal" textLength="122.7" lengthAdjust="spacingAndGlyphs">2020-02-01 UTC</text><text x="1013.2" y="989.1" font-size="15.9" fill="#5d6c7c" text-anchor="start" font-weight="normal" textLength="129.4" lengthAdjust="spacingAndGlyphs">(1 minute intervals)</text><text transform="translate(824.6 855) rotate(-90)" font-size="14" fill="#5d6c7c" text-anchor="middle" textLength="39" lengthAdjust="spacingAndGlyphs">bits/s</text>
<polyline clip-path="url(#cb)" points="880.8,915.8 885.2,919.6 889.7,914 894.1,837.9 898.5,917.7 902.9,936.3 907.4,904.3 911.8,933.5 916.2,837 920.7,914.4 925.1,916.2 929.5,917.7 933.9,911.2 938.4,853.3 942.8,909.4 947.2,897.3 951.6,898.8 956.1,912.5 960.5,839.4 964.9,898.2 969.4,906.2 973.8,898.8 978.2,904.7 982.6,835.7 987.1,910.3 991.5,910.6 995.9,908.1 1000.4,913.6 1004.8,846.8 1009.2,916.4 1013.6,919.2 1018.1,918.6 1022.5,908.4 1026.9,837 1031.4,919.2 1035.8,914 1040.2,911.2 1044.6,909.4 1049.1,815.7 1053.5,917.3 1057.9,914.4 1062.3,916.8 1066.8,914 1071.2,817.5 1075.6,914.4 1080.1,916.8 1084.5,921 1088.9,909.4 1093.3,837.4 1097.8,922.9 1102.2,915.5 1106.6,917.7 1111.1,917.7 1115.5,819.7 1119.9,920.5 1124.3,921 1128.8,916.4 1133.2,918.6 1137.6,842.2 1142.1,921.4 1146.5,933.5" fill="none" stroke="#2b5dc5" stroke-width="2.5" stroke-linejoin="round" stroke-linecap="round"/>
<polyline clip-path="url(#cb)" points="880.8,937.9 885.2,937.9 889.7,937.9 894.1,923.3 898.5,937.9 902.9,937.9 907.4,937.9 911.8,937.9 916.2,927.9 920.7,937.9 925.1,937.9 929.5,937.9 933.9,937.9 938.4,923.6 942.8,937.9 947.2,937.9 951.6,937.9 956.1,937.9 960.5,924.2 964.9,937.9 969.4,937.9 973.8,937.9 978.2,937.9 982.6,923.3 987.1,937.9 991.5,937.9 995.9,937.9 1000.4,937.9 1004.8,923.3 1009.2,937.9 1013.6,937.9 1018.1,937.9 1022.5,937.9 1026.9,922.3 1031.4,937.9 1035.8,937.9 1040.2,937.9 1044.6,937.9 1049.1,922.9 1053.5,937.9 1057.9,937.9 1062.3,937.9 1066.8,937.9 1071.2,926.6 1075.6,937.9 1080.1,937.9 1084.5,937.9 1088.9,937.9 1093.3,922.9 1097.8,937.9 1102.2,937.9 1106.6,937.9 1111.1,937.9 1115.5,922.9 1119.9,937.9 1124.3,937.9 1128.8,937.9 1133.2,937.9 1137.6,922.9 1142.1,937.9 1146.5,937.9" fill="none" stroke="#d99e2d" stroke-width="2.5" stroke-linejoin="round" stroke-linecap="round"/>
<polyline clip-path="url(#cb)" points="880.8,937.9 885.2,913.6 889.7,913.6 894.1,937.9 898.5,937.9 902.9,937.9 907.4,937.9 911.8,937.9 916.2,937.9 920.7,937.9 925.1,937.9 929.5,913.6 933.9,913.6 938.4,937.9 942.8,937.9 947.2,937.9 951.6,937.9 956.1,937.9 960.5,937.9 964.9,937.9 969.4,937.9 973.8,913.6 978.2,913.6 982.6,937.9 987.1,937.9 991.5,937.9 995.9,937.9 1000.4,937.9 1004.8,937.9 1009.2,937.9 1013.6,937.9 1018.1,913.6 1022.5,913.6 1026.9,937.9 1031.4,937.9 1035.8,937.9 1040.2,937.9 1044.6,937.9 1049.1,937.9 1053.5,937.9 1057.9,937.9 1062.3,913.6 1066.8,913.6 1071.2,937.9 1075.6,937.9 1080.1,937.9 1084.5,937.9 1088.9,937.9 1093.3,937.9 1097.8,937.9 1102.2,937.9 1106.6,913.6 1111.1,913.6 1115.5,937.9 1119.9,937.9 1124.3,937.9 1128.8,937.9 1133.2,937.9 1137.6,937.9 1142.1,937.9 1146.5,937.9" fill="none" stroke="#3fa037" stroke-width="2.5" stroke-linejoin="round" stroke-linecap="round"/>
<polyline clip-path="url(#cb)" points="880.8,937.9 885.2,937.9 889.7,911.8 894.1,937.9 898.5,937.9 902.9,937.9 907.4,937.9 911.8,937.9 916.2,937.9 920.7,937.9 925.1,937.9 929.5,937.9 933.9,911.8 938.4,937.9 942.8,937.9 947.2,937.9 951.6,937.9 956.1,937.9 960.5,937.9 964.9,937.9 969.4,937.9 973.8,937.9 978.2,911.8 982.6,937.9 987.1,937.9 991.5,937.9 995.9,937.9 1000.4,937.9 1004.8,937.9 1009.2,937.9 1013.6,937.9 1018.1,937.9 1022.5,911.8 1026.9,937.9 1031.4,937.9 1035.8,937.9 1040.2,937.9 1044.6,937.9 1049.1,937.9 1053.5,937.9 1057.9,937.9 1062.3,937.9 1066.8,911.8 1071.2,937.9 1075.6,937.9 1080.1,937.9 1084.5,937.9 1088.9,937.9 1093.3,937.9 1097.8,937.9 1102.2,937.9 1106.6,937.9 1111.1,911.8 1115.5,937.9 1119.9,937.9 1124.3,937.9 1128.8,937.9 1133.2,937.9 1137.6,937.9 1142.1,937.9 1146.5,937.9" fill="none" stroke="#d0432b" stroke-width="2.5" stroke-linejoin="round" stroke-linecap="round"/>
<path d="M880.8 938.2 H1149" stroke="#a9c945" stroke-width="1.4"/>
<path d="M1286.5 938.4 H1546.8" stroke="#e6e6e6" stroke-width="1.3"/><text x="1266.1" y="944.5" font-size="15.9" fill="#5d6c7c" text-anchor="end" font-weight="normal" textLength="8.4" lengthAdjust="spacingAndGlyphs">0</text><path d="M1286.5 856.2 H1546.8" stroke="#e6e6e6" stroke-width="1.3"/><text x="1266.1" y="862.3" font-size="15.9" fill="#5d6c7c" text-anchor="end" font-weight="normal" textLength="28.7" lengthAdjust="spacingAndGlyphs">10M</text><path d="M1286.5 771.9 H1546.8" stroke="#e6e6e6" stroke-width="1.3"/><text x="1266.1" y="779" font-size="15.9" fill="#5d6c7c" text-anchor="end" font-weight="normal" textLength="31.5" lengthAdjust="spacingAndGlyphs">20M</text><path d="M1412 771.9 V938.4" stroke="#e6e6e6" stroke-width="1.3"/><path d="M1412 938.4 V950.6" stroke="#ececec" stroke-width="1.3"/><path d="M1539.2 771.9 V938.4" stroke="#e6e6e6" stroke-width="1.3"/><path d="M1539.2 938.4 V950.6" stroke="#ececec" stroke-width="1.3"/><text x="1412" y="964.1" font-size="15.9" fill="#5d6c7c" text-anchor="middle" font-weight="normal" textLength="39" lengthAdjust="spacingAndGlyphs">17:30</text><text x="1546.8" y="964.1" font-size="15.9" fill="#5d6c7c" text-anchor="end" font-weight="normal" textLength="40" lengthAdjust="spacingAndGlyphs">18:00</text><text x="1287.5" y="989.1" font-size="15.9" fill="#5d6c7c" text-anchor="start" font-weight="normal" textLength="122.7" lengthAdjust="spacingAndGlyphs">2020-02-01 UTC</text><text x="1415.9" y="989.1" font-size="15.9" fill="#5d6c7c" text-anchor="start" font-weight="normal" textLength="129.4" lengthAdjust="spacingAndGlyphs">(1 minute intervals)</text><text transform="translate(1222.7 855) rotate(-90)" font-size="14" fill="#5d6c7c" text-anchor="middle" textLength="39" lengthAdjust="spacingAndGlyphs">bits/s</text>
<polyline clip-path="url(#cb)" points="1289,817.5 1293.3,818.9 1297.5,818.1 1301.8,819.2 1306.1,819.3 1310.3,816.8 1314.6,816.6 1318.9,820.2 1323.1,817.6 1327.4,817.5 1331.7,820.9 1335.9,818.6 1340.2,820.2 1344.5,818.6 1348.7,819.3 1353,817.2 1357.3,819.3 1361.5,820.3 1365.8,818.8 1370.1,819.8 1374.3,875.7 1378.6,896.9 1382.9,895.2 1387.1,897.1 1391.4,896.6 1395.7,895.9 1399.9,895.2 1404.2,897.4 1408.5,896.3 1412.7,897 1417,897.4 1421.3,897 1425.5,897.5 1429.8,896.1 1434.1,897.2 1438.3,896.3 1442.6,897.5 1446.9,897.4 1451.1,895.3 1455.4,895.4 1459.7,895.7 1463.9,897.6 1468.2,896.2 1472.5,896.7 1476.7,895.9 1481,896.4 1485.3,896.1 1489.5,896 1493.8,896.6 1498.1,896.6 1502.3,897.5 1506.6,896.9 1510.9,897.5 1515.2,897.3 1519.4,897.7 1523.7,896.9 1528,895.5 1532.2,897.4 1536.5,897.6 1540.8,909.6 1545,909.4" fill="none" stroke="#2b5dc5" stroke-width="2.5" stroke-linejoin="round" stroke-linecap="round"/>
<polyline clip-path="url(#cb)" points="1289,874.8 1293.3,874.1 1297.5,874.4 1301.8,873.4 1306.1,874.7 1310.3,874.1 1314.6,873.6 1318.9,873.1 1323.1,874.7 1327.4,875 1331.7,873.2 1335.9,874.6 1340.2,873.8 1344.5,873.3 1348.7,873.6 1353,874.5 1357.3,874.7 1361.5,873.1 1365.8,874.2 1370.1,873.1 1374.3,915.5 1378.6,926.5 1382.9,926 1387.1,926.7 1391.4,926.8 1395.7,926.2 1399.9,926.8 1404.2,926 1408.5,925.7 1412.7,926.3 1417,925.6 1421.3,925.8 1425.5,926.1 1429.8,926.3 1434.1,925.8 1438.3,925.7 1442.6,926.6 1446.9,926 1451.1,926.8 1455.4,926.7 1459.7,926.1 1463.9,926.2 1468.2,926.2 1472.5,926.4 1476.7,926.3 1481,926.3 1485.3,926.3 1489.5,926.7 1493.8,926.2 1498.1,926.1 1502.3,926.5 1506.6,925.9 1510.9,926 1515.2,926.8 1519.4,926.2 1523.7,926.3 1528,925.6 1532.2,926.1 1536.5,926.3 1540.8,930 1545,930" fill="none" stroke="#d99e2d" stroke-width="2.5" stroke-linejoin="round" stroke-linecap="round"/>
<polyline clip-path="url(#cb)" points="1289,887.3 1293.3,888.8 1297.5,888.8 1301.8,887.4 1306.1,888.8 1310.3,888.4 1314.6,888.9 1318.9,888.1 1323.1,889 1327.4,889.1 1331.7,887.4 1335.9,887.4 1340.2,888.9 1344.5,889.6 1348.7,887.9 1353,888.4 1357.3,888.7 1361.5,888.1 1365.8,888.2 1370.1,888.1 1374.3,904.4 1378.6,906.3 1382.9,906.6 1387.1,906.2 1391.4,906.3 1395.7,906.9 1399.9,905.8 1404.2,906.6 1408.5,906.8 1412.7,906.2 1417,906.1 1421.3,906.9 1425.5,906.1 1429.8,906 1434.1,906.4 1438.3,906.8 1442.6,905.9 1446.9,906.2 1451.1,906.3 1455.4,907 1459.7,906.4 1463.9,907 1468.2,906 1472.5,906.3 1476.7,906.7 1481,907.1 1485.3,906.4 1489.5,906.1 1493.8,906 1498.1,906.5 1502.3,906.1 1506.6,906.9 1510.9,907 1515.2,906 1519.4,906.2 1523.7,906.9 1528,906.7 1532.2,906.9 1536.5,906.3 1540.8,914.5 1545,913.8" fill="none" stroke="#3fa037" stroke-width="2.5" stroke-linejoin="round" stroke-linecap="round"/>
<path d="M1289 937.9 H1545" stroke="#d0432b" stroke-width="0.9" stroke-opacity="0.6"/>
<path d="M1289 937.5 H1545" stroke="#a9c945" stroke-width="1.5"/></svg>
</body></html>
